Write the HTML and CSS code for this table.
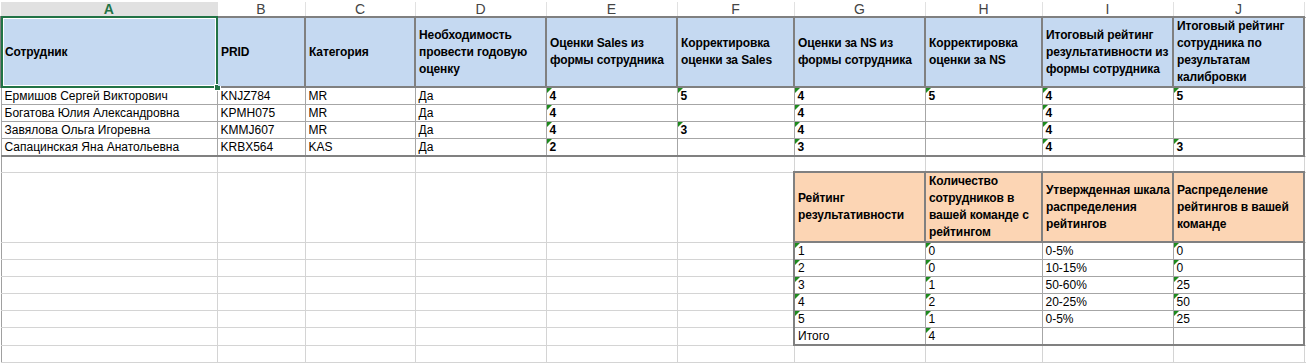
FILE: index.html
```html
<!DOCTYPE html>
<html lang="ru">
<head>
<meta charset="utf-8">
<title>Лист</title>
<link rel="stylesheet" href="styles.css">
</head>
<body>
<table class="sheet">
<colgroup>
<col class="cA"><col class="cB"><col class="cC"><col class="cD"><col class="cE"><col class="cF"><col class="cG"><col class="cH"><col class="cI"><col class="cJ"><col class="cK">
</colgroup>
<thead>
<tr class="letters">
<th class="on">A</th><th>B</th><th>C</th><th>D</th><th>E</th><th>F</th><th>G</th><th>H</th><th>I</th><th>J</th><th></th>
</tr>
</thead>
<tbody>
<tr class="tall">
<td class="h sel"><span class="selbox"><i class="handle"></i></span><div class="wrap"><span>Сотрудник</span></div></td>
<td class="h"><div class="wrap"><span>PRID</span></div></td>
<td class="h"><div class="wrap"><span>Категория</span></div></td>
<td class="h"><div class="wrap"><span>Необходимость<br>провести годовую<br>оценку</span></div></td>
<td class="h"><div class="wrap"><span>Оценки Sales из<br>формы сотрудника</span></div></td>
<td class="h"><div class="wrap"><span>Корректировка<br>оценки за Sales</span></div></td>
<td class="h"><div class="wrap"><span>Оценки за NS из<br>формы сотрудника</span></div></td>
<td class="h"><div class="wrap"><span>Корректировка<br>оценки за NS</span></div></td>
<td class="h"><div class="wrap"><span>Итоговый рейтинг<br>результативности из<br>формы сотрудника</span></div></td>
<td class="h"><div class="wrap"><span>Итоговый рейтинг<br>сотрудника по<br>результатам<br>калибровки</span></div></td>
<td></td>
</tr>
<tr>
<td class="d">Ермишов Сергей Викторович</td><td class="d">KNJZ784</td><td class="d">MR</td><td class="d">Да</td>
<td class="d n tri">4</td><td class="d n tri">5</td><td class="d n tri">4</td><td class="d n tri">5</td><td class="d n tri">4</td><td class="d n tri rt">5</td><td></td>
</tr>
<tr>
<td class="d">Богатова Юлия Александровна</td><td class="d">KPMH075</td><td class="d">MR</td><td class="d">Да</td>
<td class="d n tri">4</td><td class="d n"></td><td class="d n tri">4</td><td class="d n"></td><td class="d n tri">4</td><td class="d n rt"></td><td></td>
</tr>
<tr>
<td class="d">Завялова Ольга Игоревна</td><td class="d">KMMJ607</td><td class="d">MR</td><td class="d">Да</td>
<td class="d n tri">4</td><td class="d n tri">3</td><td class="d n tri">4</td><td class="d n"></td><td class="d n tri">4</td><td class="d n rt"></td><td></td>
</tr>
<tr>
<td class="d bb">Сапацинская Яна Анатольевна</td><td class="d bb">KRBX564</td><td class="d bb">KAS</td><td class="d bb">Да</td>
<td class="d n tri bb">2</td><td class="d n bb"></td><td class="d n tri bb">3</td><td class="d n bb"></td><td class="d n tri bb">4</td><td class="d n tri bb rt">3</td><td></td>
</tr>
<tr class="gap">
<td></td><td></td><td></td><td></td><td></td><td></td><td></td><td></td><td></td><td></td><td></td>
</tr>
<tr class="tall">
<td></td><td></td><td></td><td></td><td></td><td></td>
<td class="o"><div class="wrap"><span>Рейтинг<br>результативности</span></div></td>
<td class="o"><div class="wrap"><span>Количество<br>сотрудников в<br>вашей команде с<br>рейтингом</span></div></td>
<td class="o"><div class="wrap"><span>Утвержденная шкала<br>распределения<br>рейтингов</span></div></td>
<td class="o"><div class="wrap"><span>Распределение<br>рейтингов в вашей<br>команде</span></div></td>
<td></td>
</tr>
<tr>
<td></td><td></td><td></td><td></td><td></td><td></td>
<td class="d lt tri">1</td><td class="d tri">0</td><td class="d">0-5%</td><td class="d tri rt">0</td><td></td>
</tr>
<tr>
<td></td><td></td><td></td><td></td><td></td><td></td>
<td class="d lt tri">2</td><td class="d tri">0</td><td class="d">10-15%</td><td class="d tri rt">0</td><td></td>
</tr>
<tr>
<td></td><td></td><td></td><td></td><td></td><td></td>
<td class="d lt tri">3</td><td class="d tri">1</td><td class="d">50-60%</td><td class="d tri rt">25</td><td></td>
</tr>
<tr>
<td></td><td></td><td></td><td></td><td></td><td></td>
<td class="d lt tri">4</td><td class="d tri">2</td><td class="d">20-25%</td><td class="d tri rt">50</td><td></td>
</tr>
<tr>
<td></td><td></td><td></td><td></td><td></td><td></td>
<td class="d lt tri">5</td><td class="d tri">1</td><td class="d">0-5%</td><td class="d tri rt">25</td><td></td>
</tr>
<tr>
<td></td><td></td><td></td><td></td><td></td><td></td>
<td class="d lt bb">Итого</td><td class="d tri bb">4</td><td class="d bb"></td><td class="d bb rt"></td><td></td>
</tr>
<tr>
<td></td><td></td><td></td><td></td><td></td><td></td><td></td><td></td><td></td><td></td><td></td>
</tr>
<tr>
<td></td><td></td><td></td><td></td><td></td><td></td><td></td><td></td><td></td><td></td><td></td>
</tr>
</tbody>
</table>
</body>
</html>
```

FILE: styles.css
```css
html, body {
  margin: 0;
  padding: 0;
  background: #ffffff;
  overflow: hidden;
}

body {
  width: 1306px;
  height: 363px;
  font-family: "Liberation Sans", Arial, sans-serif;
}

.sheet {
  border-collapse: collapse;
  table-layout: fixed;
  width: 1356px;
  font-size: 12px;
  color: #000000;
}

.cA { width: 216px; }
.cB { width: 88px; }
.cC { width: 110px; }
.cD { width: 131px; }
.cE { width: 131px; }
.cF { width: 117px; }
.cG { width: 131px; }
.cH { width: 117px; }
.cI { width: 131px; }
.cJ { width: 131px; }
.cK { width: 53px; }

/* column letters */
.letters th {
  height: 14px;
  padding: 0;
  border-top: 2px solid #ffffff;
  border-right: 1px solid #e1e1e1;
  border-bottom: 1px solid #ababab;
  background: #ffffff;
  color: #444444;
  font-weight: normal;
  font-size: 14px;
  line-height: 14px;
  text-align: center;
}

.letters th.on {
  background: #e1e1e1;
  color: #217346;
  font-weight: bold;
}

/* cells */
.sheet td {
  height: 16px;
  padding: 0 2px 0 3px;
  border: 1px solid #d4d4d4;
  white-space: nowrap;
  line-height: 16px;
  vertical-align: middle;
  position: relative;
}

.sheet td:first-child {
  border-left: 1px solid #a0a0a0;
}

.sheet tr.tall td {
  height: 66px;
}

.sheet tr.gap td {
  height: 14px;
}

.wrap {
  height: 68px;
  display: flex;
  flex-direction: column;
  justify-content: center;
}

.sheet td.h {
  background: #c5d9f1;
  border: 2px solid #808080;
  font-weight: bold;
  line-height: 17px;
  letter-spacing: -0.1px;
}

.sheet td.o {
  background: #fcd5b4;
  border: 2px solid #808080;
  font-weight: bold;
  line-height: 17px;
  letter-spacing: -0.1px;
}

.sheet td.d {
  border: 1px solid #a6a6a6;
}

.sheet td.n {
  font-weight: bold;
}

.sheet td.bb {
  border-bottom: 2px solid #808080;
}

.sheet td.rt {
  border-right: 2px solid #808080;
}

.sheet td.lt {
  border-left: 2px solid #808080;
}

/* error indicator */
.tri::before {
  content: "";
  position: absolute;
  left: 0;
  top: 0;
  width: 0;
  height: 0;
  border-top: 5px solid #1e8a1e;
  border-right: 5px solid transparent;
}

/* selected cell */
.selbox {
  position: absolute;
  left: -1px;
  top: -2px;
  right: -2px;
  bottom: -2px;
  border: 2px solid #217346;
  box-shadow: inset 0 0 0 1px #ffffff;
  pointer-events: none;
}

.handle {
  position: absolute;
  right: -5px;
  bottom: -5px;
  width: 5px;
  height: 5px;
  background: #217346;
  border: 1px solid #ffffff;
}
```
